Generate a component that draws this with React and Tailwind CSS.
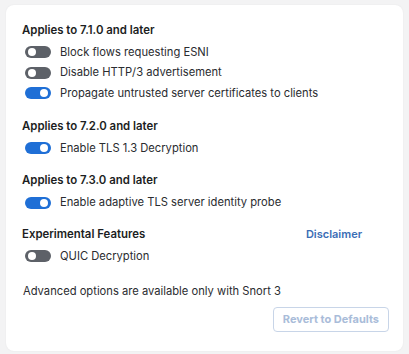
import React from "react";

function Toggle({ on }) {
  return (
    <span
      className={
        "relative inline-flex h-[12px] w-[26px] shrink-0 items-center rounded-full " +
        (on ? "bg-[#1f6fd6]" : "bg-[#5d6168]")
      }
    >
      <span
        className={
          "absolute top-[2px] h-[8px] w-[8px] rounded-full bg-white " +
          (on ? "left-[15px]" : "left-[3px]")
        }
      />
    </span>
  );
}

function Row({ on, label }) {
  return (
    <div className="flex h-[20.5px] items-center gap-[9px] pl-[3px]">
      <Toggle on={on} />
      <span className="text-[11.2px] text-[#2a2c30]">{label}</span>
    </div>
  );
}

function Heading({ children }) {
  return <div className="text-[11.4px] font-semibold text-[#1c1e22]">{children}</div>;
}

export default function App() {
  return (
    <div
      className="min-h-[354px] bg-[#f3f3f4] px-[6px] pt-[5px] pb-[6px]"
      style={{ fontFamily: "Inter, 'Noto Sans', sans-serif" }}
    >
      <div className="rounded-[8px] bg-white px-[16px] pt-[17px] pb-[19px] shadow-[0_0_2px_rgba(0,0,0,0.06)]">
        <Heading>Applies to 7.1.0 and later</Heading>
        <div className="mt-[3px]">
          <Row on={false} label="Block flows requesting ESNI" />
          <Row on={false} label="Disable HTTP/3 advertisement" />
          <Row on={true} label="Propagate untrusted server certificates to clients" />
        </div>

        <div className="mt-[14px]">
          <Heading>Applies to 7.2.0 and later</Heading>
          <div className="mt-[3px]">
            <Row on={true} label="Enable TLS 1.3 Decryption" />
          </div>
        </div>

        <div className="mt-[14px]">
          <Heading>Applies to 7.3.0 and later</Heading>
          <div className="mt-[3px]">
            <Row on={true} label="Enable adaptive TLS server identity probe" />
          </div>
        </div>

        <div className="mt-[13px]">
          <div className="flex items-center justify-between pr-[25px]">
            <Heading>Experimental Features</Heading>
            <span className="text-[11px] font-semibold text-[#3a6db5]">Disclaimer</span>
          </div>
          <div className="mt-[3px]">
            <Row on={false} label="QUIC Decryption" />
          </div>
        </div>

        <div className="mt-[17px] pl-[1px] text-[11.2px] text-[#2a2c30]">
          Advanced options are available only with Snort 3
        </div>

        <div className="mt-[7px] -mr-[2px] flex justify-end">
          <button className="h-[25px] rounded-[4px] border border-[#c8d5e8] px-[9px] text-[11px] font-bold text-[#a9bcd9]">
            Revert to Defaults
          </button>
        </div>
      </div>
    </div>
  );
}
